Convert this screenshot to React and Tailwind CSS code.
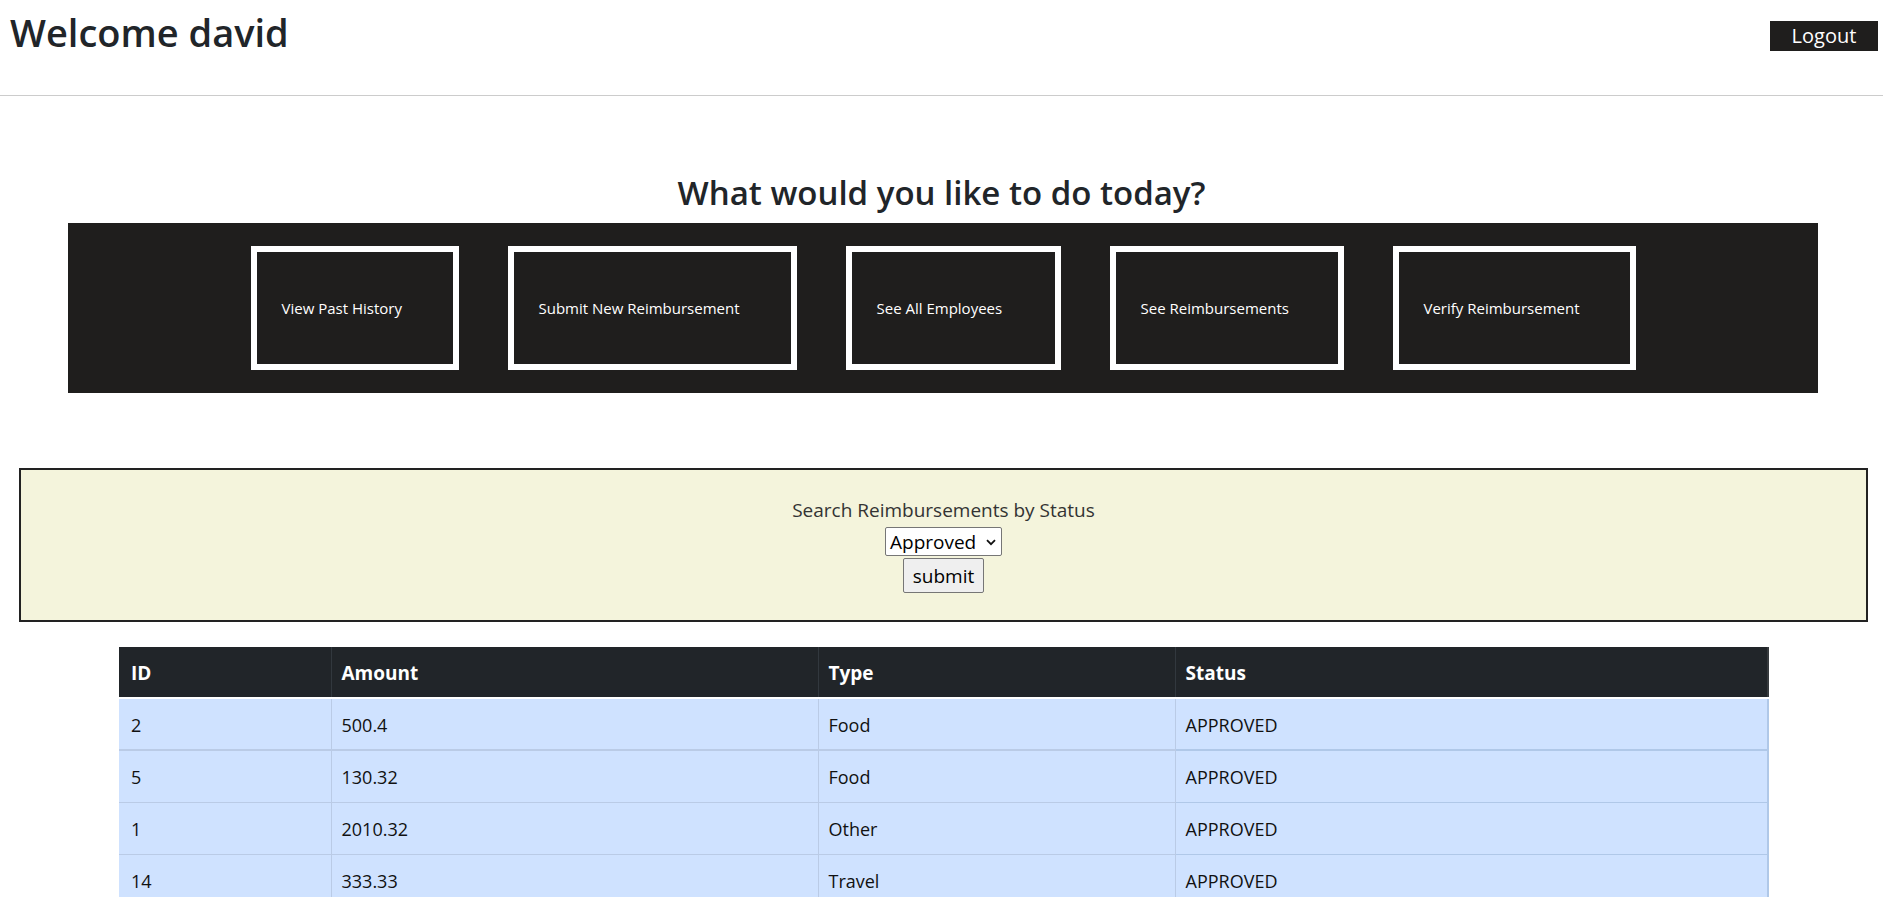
import React from "react";

const tiles = [
  { label: "View Past History", w: "w-[208px]" },
  { label: "Submit New Reimbursement", w: "w-[289px]" },
  { label: "See All Employees", w: "w-[215px]" },
  { label: "See Reimbursements", w: "w-[234px]" },
  { label: "Verify Reimbursement", w: "w-[243px]" },
];

const rows = [
  { id: 2, amount: "500.4", type: "Food", status: "APPROVED" },
  { id: 5, amount: "130.32", type: "Food", status: "APPROVED" },
  { id: 1, amount: "2010.32", type: "Other", status: "APPROVED" },
  { id: 14, amount: "333.33", type: "Travel", status: "APPROVED" },
];

const App = () => {
  return (
    <div className="min-h-screen bg-white font-['Open_Sans',sans-serif] text-[#212529]">
      {/* top bar */}
      <header className="flex h-[96px] items-start justify-between border-b border-[#cccccc]">
        <h1 className="ml-[10px] mt-[10px] text-[38px] font-semibold leading-[1.2]">Welcome david</h1>
        <button className="mr-[5px] mt-[21px] h-[30px] w-[108px] bg-[#1f1e1d] text-[20px] leading-none text-white">
          Logout
        </button>
      </header>

      <h2 className="mt-[73px] text-center text-[33px] font-semibold leading-[48px]">
        What would you like to do today?
      </h2>

      {/* action tiles */}
      <div className="ml-[68px] mr-[65px] mt-[6px] flex justify-center gap-[49px] bg-[#1f1e1d] py-[23px]">
        {tiles.map((t) => (
          <button
            key={t.label}
            className={`${t.w} flex h-[124px] items-center border-[6px] border-white bg-[#1f1e1d] pl-[25px] text-left text-[15px] text-white`}
          >
            {t.label}
          </button>
        ))}
      </div>

      {/* search by status */}
      <div className="ml-[19px] mr-[15px] mt-[75px] flex flex-col items-center border-2 border-[#222222] bg-[#f4f4dc] pb-[27px] pt-[25px] text-[19px] leading-[30px]">
        <p className="text-[#333333]">Search Reimbursements by Status</p>
        <div className="mt-[2px] flex h-[29px] w-[117px] items-center justify-between rounded-[2px] border border-[#767676] bg-white pl-[4px] pr-[5px] text-black">
          <span>Approved</span>
          <svg width="10" height="7" viewBox="0 0 10 7" className="mt-[2px]">
            <path d="M1 1.2 L5 5.2 L9 1.2" fill="none" stroke="#111" strokeWidth="1.8" />
          </svg>
        </div>
        <button className="mt-[2px] h-[35px] w-[81px] rounded-[2px] border border-[#767676] bg-[#efefef] text-black">
          submit
        </button>
      </div>

      {/* results */}
      <table className="ml-[119px] mt-[25px] w-[1650px] table-fixed border-collapse text-[18px]">
        <thead>
          <tr className="bg-[#212529] text-[19px] text-white">
            <th className="h-[51px] w-[212px] border-b-2 border-r border-b-white border-r-[#32383e] px-[12px] pt-[3px] text-left font-bold">ID</th>
            <th className="h-[51px] w-[487px] border-b-2 border-r border-b-white border-r-[#32383e] px-[10px] pt-[3px] text-left font-bold">Amount</th>
            <th className="h-[51px] w-[357px] border-b-2 border-r border-b-white border-r-[#32383e] px-[10px] pt-[3px] text-left font-bold">Type</th>
            <th className="h-[51px] border-b-2 border-r-2 border-b-white border-r-[#373b3e] px-[10px] pt-[3px] text-left font-bold">Status</th>
          </tr>
        </thead>
        <tbody>
          {rows.map((r, i) => (
            <tr key={r.id} className="bg-[#cfe2ff] text-[#111]">
              <td className={`h-[52px] border-r border-[#bacbe6] px-[12px] pt-[3px] ${i === 0 ? "border-b-2" : "border-b"}`}>{r.id}</td>
              <td className={`h-[52px] border-r border-[#bacbe6] px-[10px] pt-[3px] ${i === 0 ? "border-b-2" : "border-b"}`}>{r.amount}</td>
              <td className={`h-[52px] border-r border-[#bacbe6] px-[10px] pt-[3px] ${i === 0 ? "border-b-2" : "border-b"}`}>{r.type}</td>
              <td className={`h-[52px] border-r-2 border-[#b0c8e8] px-[10px] pt-[3px] ${i === 0 ? "border-b-2" : "border-b"}`}>{r.status}</td>
            </tr>
          ))}
        </tbody>
      </table>
    </div>
  );
};

export default App;
